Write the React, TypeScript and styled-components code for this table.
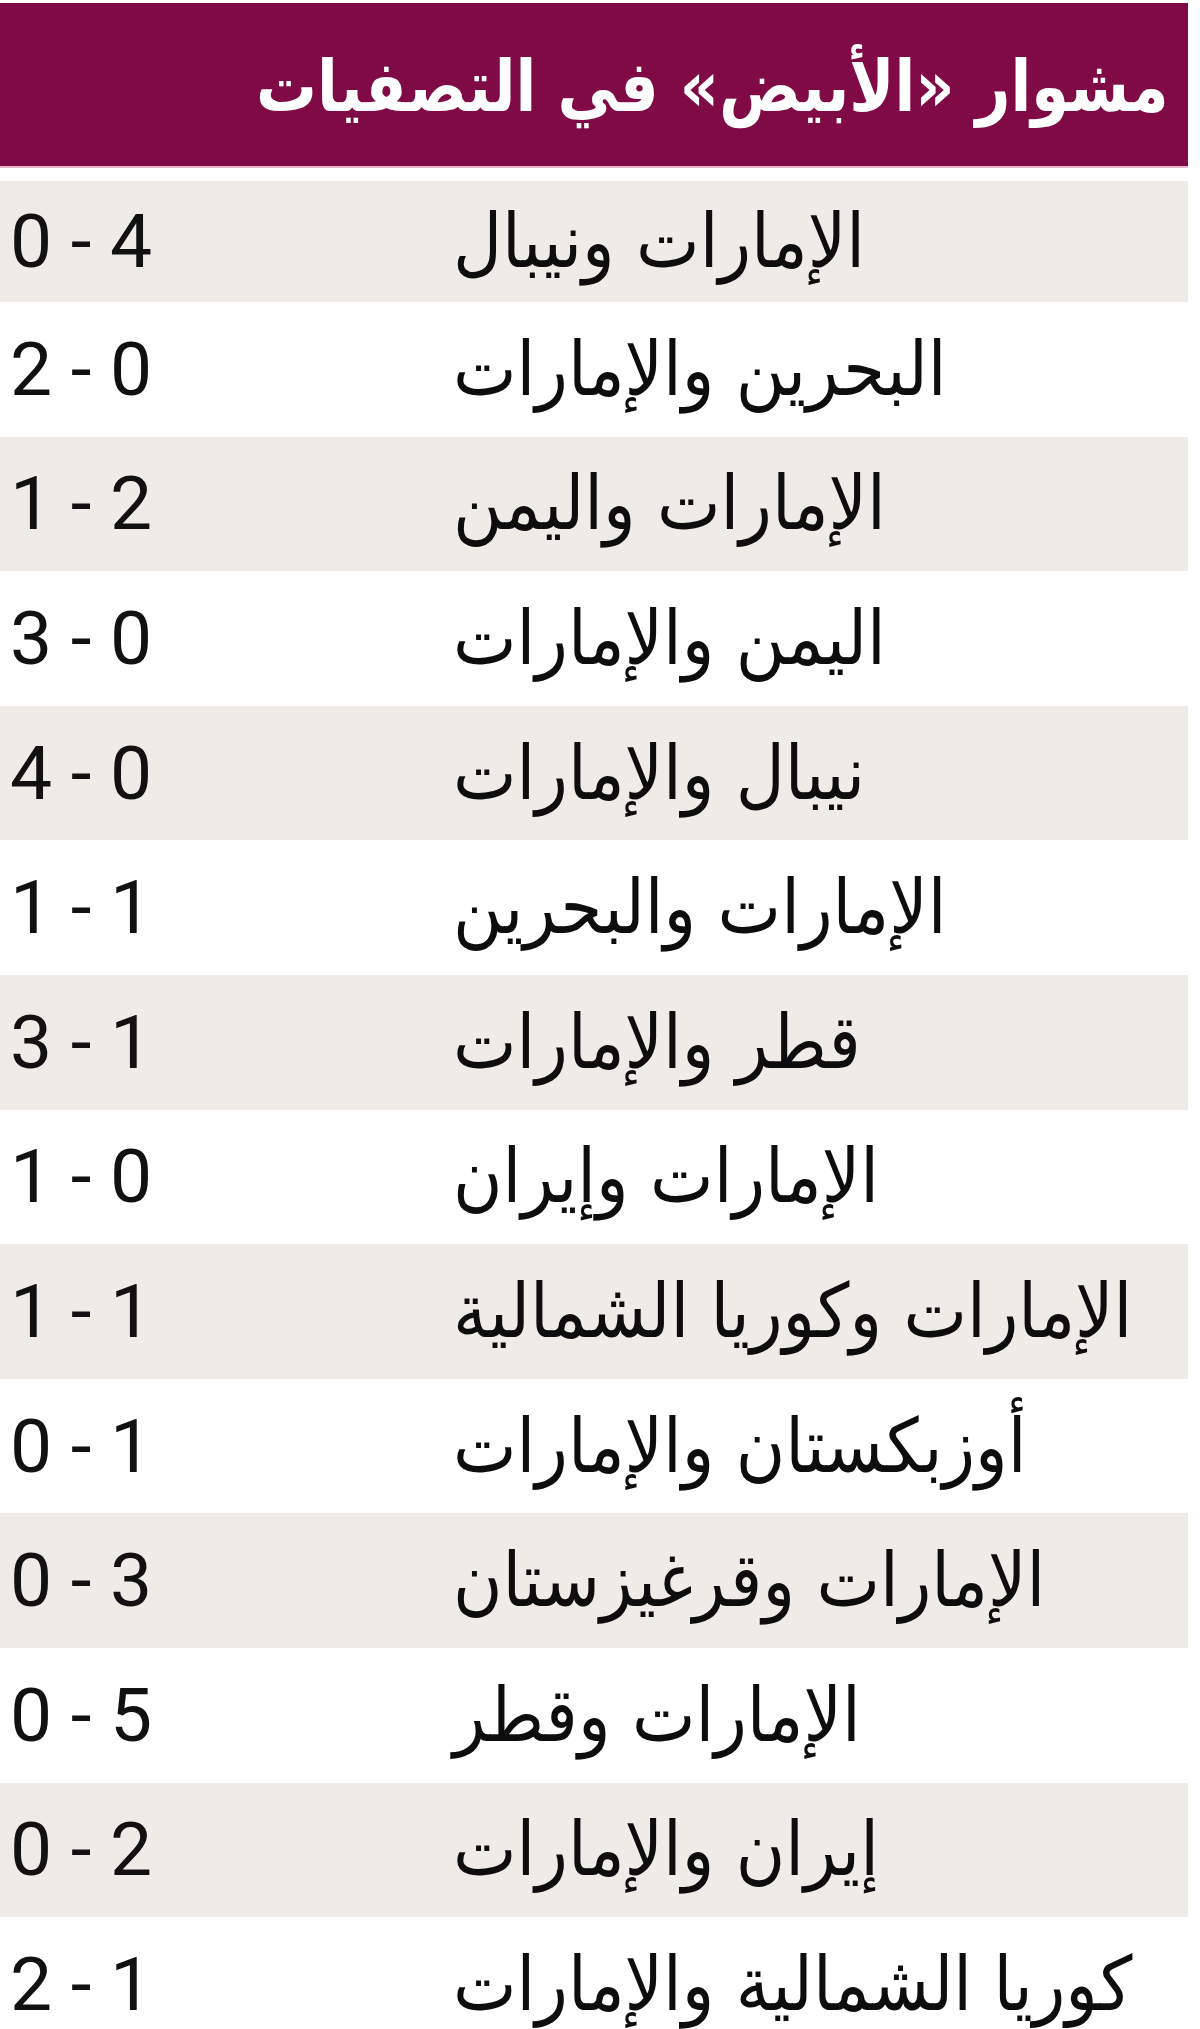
import styled, { createGlobalStyle } from "styled-components";

const matches = [
  { name: "الإمارات ونيبال", score: "0 - 4" },
  { name: "البحرين والإمارات", score: "2 - 0" },
  { name: "الإمارات واليمن", score: "1 - 2" },
  { name: "اليمن والإمارات", score: "3 - 0" },
  { name: "نيبال والإمارات", score: "4 - 0" },
  { name: "الإمارات والبحرين", score: "1 - 1" },
  { name: "قطر والإمارات", score: "3 - 1" },
  { name: "الإمارات وإيران", score: "1 - 0" },
  { name: "الإمارات وكوريا الشمالية", score: "1 - 1" },
  { name: "أوزبكستان والإمارات", score: "0 - 1" },
  { name: "الإمارات وقرغيزستان", score: "0 - 3" },
  { name: "الإمارات وقطر", score: "0 - 5" },
  { name: "إيران والإمارات", score: "0 - 2" },
  { name: "كوريا الشمالية والإمارات", score: "2 - 1" },
];

const GlobalStyle = createGlobalStyle`
  html, body {
    margin: 0;
    padding: 0;
    background: #ffffff;
  }
  body {
    font-family: "DejaVu Sans Condensed", "DejaVu Sans", sans-serif;
  }
`;

const App = () => {
  return (
    <>
      <GlobalStyle />
      <Page>
        <Table>
          <Header>
            <Title dir="rtl">مشوار «الأبيض» في التصفيات</Title>
          </Header>
          <Rows>
            {matches.map((m, i) => (
              <Row key={i} $shaded={i % 2 === 0} $first={i === 0}>
                <Score>{m.score}</Score>
                <Teams dir="rtl">{m.name}</Teams>
              </Row>
            ))}
          </Rows>
        </Table>
      </Page>
    </>
  );
};

export default App;

const Page = styled.div`
  width: 1200px;
  height: 2029px;
  overflow: hidden;
  background: #ffffff;
  padding-top: 3px;
  box-sizing: border-box;
`;

const Table = styled.div`
  width: 1188px;
  display: flex;
  flex-direction: column;
`;

const Header = styled.div`
  height: 165px;
  background: #7f0a45;
  display: flex;
  align-items: center;
  justify-content: flex-end;
  padding-right: 19px;
  border-bottom: 2px solid #e7b4cc;
  box-sizing: border-box;
`;

const Title = styled.h1`
  margin: 4px 0 0;
  color: #ffffff;
  font-family: "DejaVu Sans Condensed", "DejaVu Sans", sans-serif;
  font-weight: 700;
  font-size: 71px;
  line-height: 1;
  white-space: nowrap;
  transform: scaleX(0.95);
  transform-origin: right center;
`;

const Rows = styled.div`
  display: flex;
  flex-direction: column;
  padding-top: 13px;
`;

const Row = styled.div<{ $shaded: boolean; $first: boolean }>`
  height: ${(p) => (p.$first ? "121px" : "134.6px")};
  background: ${(p) => (p.$shaded ? "#efebe6" : "#ffffff")};
  display: flex;
  align-items: center;
  direction: ltr;
`;

const Score = styled.div`
  width: 453px;
  padding-left: 10px;
  box-sizing: border-box;
  font-family: Roboto, "Liberation Sans", sans-serif;
  font-size: 75px;
  color: #111111;
  white-space: pre;
  line-height: 1;
`;

const Teams = styled.div`
  flex: 1;
  text-align: left;
  font-family: "DejaVu Sans Condensed", "DejaVu Sans", sans-serif;
  font-size: 75px;
  color: #0d0d0d;
  line-height: 1;
  white-space: nowrap;
`;
